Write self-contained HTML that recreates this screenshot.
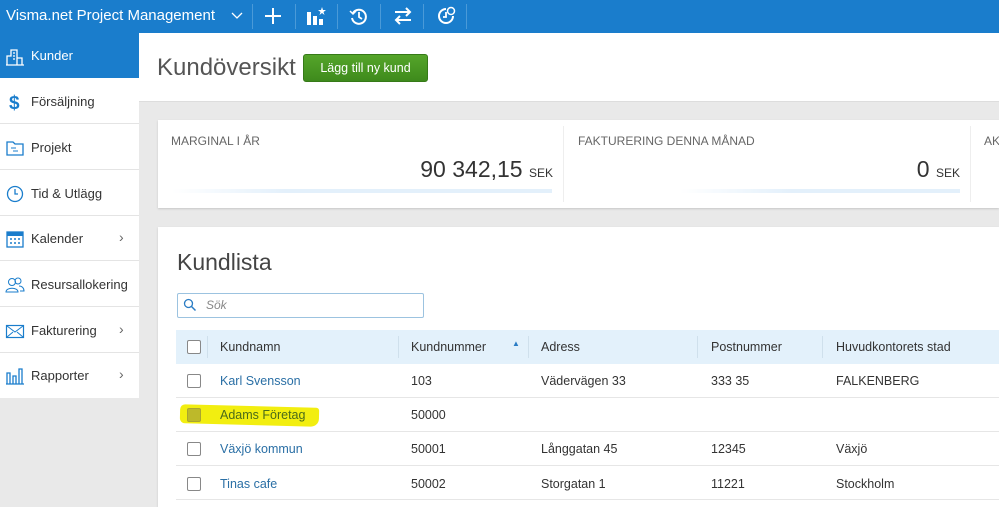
<!DOCTYPE html>
<html><head><meta charset="utf-8"><style>
*{box-sizing:border-box;margin:0;padding:0}
body{width:999px;height:507px;overflow:hidden;background:#e9e9e9;font-family:"Liberation Sans",sans-serif;position:relative;color:#333}
.abs{position:absolute}
.top{left:0;top:0;width:999px;height:33px;background:#1a7dcc}
.top .t{left:6px;top:7px;color:#fff;font-size:15px}
.sep{top:4px;width:1px;height:25px;background:#4a9ad8}
.side{left:0;top:33px;width:139px;height:365px;background:#fff}
.it{position:absolute;left:0;width:139px;height:45px;border-bottom:1px solid #e4e4e4;font-size:13px;color:#333}
.it span{position:absolute;left:31px;top:15px}
.it i{position:absolute;left:119px;top:13px;font-style:normal;color:#666;font-size:14px}
.it svg{position:absolute;left:5px;top:13px}
.chk{position:absolute;width:14px;height:14px;border:1px solid #888;border-radius:2px;background:#fff}
.cell{position:absolute;font-size:12.5px}
.row{position:absolute;left:176px;width:823px;height:34px;border-bottom:1px solid #e6e6e6}
.lnk{color:#2a6fa5}
</style></head><body>
<div class="abs top">
<div class="abs t">Visma.net Project Management</div>
<svg class="abs" style="left:231px;top:12px" width="12" height="8"><path d="M1 1l5 5 5-5" stroke="#fff" fill="none" stroke-width="1.3"/></svg>
<div class="abs sep" style="left:252px"></div>
<svg class="abs" style="left:264px;top:7px" width="18" height="18"><path d="M9 1v16M1 9h16" stroke="#fff" stroke-width="2"/></svg>
<div class="abs sep" style="left:295px"></div>
<svg class="abs" style="left:306px;top:6px" width="20" height="20"><rect x="1" y="6" width="4" height="13" fill="#fff"/><rect x="7" y="10" width="4" height="9" fill="#fff"/><rect x="13" y="13" width="4" height="6" fill="#fff"/><path d="M16 1l1 3h3l-2.5 2 1 3-2.5-2-2.5 2 1-3-2.5-2h3z" fill="#fff"/></svg>
<div class="abs sep" style="left:337px"></div>
<svg class="abs" style="left:349px;top:6px" width="20" height="20"><path d="M4 7a7 7 0 1 1-1 5" stroke="#fff" stroke-width="2" fill="none"/><path d="M1 5l3 3 3-3" stroke="#fff" stroke-width="1.5" fill="none"/><path d="M10 6v5l3 2" stroke="#fff" stroke-width="1.8" fill="none"/></svg>
<div class="abs sep" style="left:380px"></div>
<svg class="abs" style="left:393px;top:7px" width="20" height="18"><path d="M2 5h15M13 1l4 4-4 4M18 13H3M7 9l-4 4 4 4" stroke="#fff" stroke-width="2" fill="none"/></svg>
<div class="abs sep" style="left:423px"></div>
<svg class="abs" style="left:436px;top:6px" width="20" height="20"><path d="M10 3a7 7 0 1 0 7 7" stroke="#fff" stroke-width="2" fill="none"/><path d="M10 6v5h-3" stroke="#fff" stroke-width="1.8" fill="none"/><circle cx="15" cy="5" r="3.5" fill="none" stroke="#fff" stroke-width="1.5"/></svg>
<div class="abs sep" style="left:466px"></div>
</div>
<div class="abs side">
<div class="it" style="top:0;background:#1a7dcc;color:#fff;border:0"><svg width="20" height="20"><path d="M2 19V10h4V4h6v15M12 19v-7h5v7M1 19h18M8 7h2M8 10h2M8 13h2" stroke="#fff" fill="none" stroke-width="1.3"/></svg><span style="color:#fff">Kunder</span></div>
<div class="it" style="top:46px"><svg width="20" height="20"><text x="4" y="17" font-size="19" font-weight="bold" fill="#1a7dcc" font-family="Liberation Sans">$</text></svg><span>Försäljning</span></div>
<div class="it" style="top:92px"><svg width="20" height="20"><path d="M2 4h6l2 2h8v11H2z" stroke="#1a7dcc" fill="none" stroke-width="1.3"/><path d="M6 10h5M8 13h5" stroke="#1a7dcc"/></svg><span>Projekt</span></div>
<div class="it" style="top:138px"><svg width="20" height="20"><circle cx="10" cy="10" r="7.5" stroke="#1a7dcc" fill="none" stroke-width="1.3"/><path d="M10 5v5h3" stroke="#1a7dcc" fill="none" stroke-width="1.3"/></svg><span>Tid &amp; Utlägg</span></div>
<div class="it" style="top:183px"><svg width="20" height="20"><rect x="2" y="3" width="16" height="15" stroke="#1a7dcc" fill="none" stroke-width="1.3"/><rect x="2" y="3" width="16" height="4" fill="#1a7dcc"/><path d="M5 10h2M9 10h2M13 10h2M5 14h2M9 14h2M13 14h2" stroke="#1a7dcc" stroke-width="1.5"/></svg><span>Kalender</span><i>&#8250;</i></div>
<div class="it" style="top:229px"><svg width="20" height="20"><circle cx="7" cy="7" r="3.5" stroke="#1a7dcc" fill="none"/><path d="M1 17c0-5 12-5 12 0z" stroke="#1a7dcc" fill="none"/><circle cx="13" cy="6" r="3" stroke="#1a7dcc" fill="none"/><path d="M14 11c3 0 5 2 5 5h-4" stroke="#1a7dcc" fill="none"/></svg><span>Resursallokering</span></div>
<div class="it" style="top:275px"><svg width="20" height="20"><rect x="1.5" y="4.5" width="17" height="12" stroke="#1a7dcc" fill="none" stroke-width="1.2"/><path d="M2 5l8 6 8-6M2 16l6-5M18 16l-6-5" stroke="#1a7dcc" fill="none"/></svg><span>Fakturering</span><i>&#8250;</i></div>
<div class="it" style="top:320px;border:0"><svg width="20" height="20"><path d="M1 18h18M2 18V7h3v11M8 18V10h3v8M14 18V3h3v15" stroke="#1a7dcc" fill="none" stroke-width="1.3"/></svg><span>Rapporter</span><i>&#8250;</i></div>
</div>
<div class="abs" style="left:139px;top:33px;width:860px;height:69px;background:#fff;border-bottom:1px solid #ddd"></div>
<div class="abs" style="left:157px;top:54px;font-size:24px;color:#555">Kundöversikt</div>
<div class="abs" style="left:303px;top:54px;width:125px;height:28px;background:linear-gradient(#55a52a,#3e8a1c);border-radius:3px;color:#fff;font-size:12.5px;text-align:center;line-height:26px;border:1px solid #367a18">Lägg till ny kund</div>
<div class="abs" style="left:158px;top:120px;width:841px;height:88px;background:#fff;box-shadow:0 1px 2px rgba(0,0,0,.15)"></div>
<div class="abs" style="left:563px;top:126px;width:1px;height:76px;background:#eee"></div>
<div class="abs" style="left:970px;top:126px;width:1px;height:76px;background:#eee"></div>
<div class="abs" style="left:171px;top:134px;font-size:12px;color:#666">MARGINAL I ÅR</div>
<div class="abs" style="left:578px;top:134px;font-size:12px;color:#666">FAKTURERING DENNA MÅNAD</div>
<div class="abs" style="left:984px;top:134px;font-size:12px;color:#666">AK</div>
<div class="abs" style="left:300px;top:156px;width:253px;text-align:right;font-size:23px;color:#333">90 342,15 <span style="font-size:12px">SEK</span></div>
<div class="abs" style="left:700px;top:156px;width:260px;text-align:right;font-size:23px;color:#333">0 <span style="font-size:12px">SEK</span></div>
<div class="abs" style="left:172px;top:189px;width:380px;height:4px;background:linear-gradient(90deg,#fff,#e3f0fb 30%)"></div>
<div class="abs" style="left:680px;top:189px;width:280px;height:4px;background:linear-gradient(90deg,#fff,#e3f0fb 40%)"></div>
<div class="abs" style="left:158px;top:227px;width:841px;height:280px;background:#fff;box-shadow:0 1px 2px rgba(0,0,0,.15)"></div>
<div class="abs" style="left:177px;top:249px;font-size:23px;color:#444">Kundlista</div>
<div class="abs" style="left:177px;top:293px;width:247px;height:25px;border:1px solid #9cc3e0;border-radius:2px"></div>
<svg class="abs" style="left:183px;top:298px" width="14" height="14"><circle cx="5.5" cy="5.5" r="4" stroke="#2a7cc4" fill="none" stroke-width="1.3"/><path d="M8.5 8.5l4 4" stroke="#2a7cc4" stroke-width="1.5"/></svg>
<div class="abs" style="left:206px;top:298px;font-size:12px;color:#888;font-style:italic">Sök</div>
<div class="abs" style="left:176px;top:330px;width:823px;height:34px;background:#e3f1fb"></div>
<div class="chk" style="left:187px;top:340px"></div>
<div class="abs" style="left:207px;top:336px;width:1px;height:22px;background:#cfe0ec"></div>
<div class="abs" style="left:398px;top:336px;width:1px;height:22px;background:#cfe0ec"></div>
<div class="abs" style="left:528px;top:336px;width:1px;height:22px;background:#cfe0ec"></div>
<div class="abs" style="left:697px;top:336px;width:1px;height:22px;background:#cfe0ec"></div>
<div class="abs" style="left:822px;top:336px;width:1px;height:22px;background:#cfe0ec"></div>
<div class="cell" style="left:220px;top:340px">Kundnamn</div>
<div class="cell" style="left:411px;top:340px">Kundnummer</div>
<div class="cell" style="left:512px;top:339px;font-size:8px;color:#2a7cc4">▲</div>
<div class="cell" style="left:541px;top:340px">Adress</div>
<div class="cell" style="left:711px;top:340px">Postnummer</div>
<div class="cell" style="left:836px;top:340px">Huvudkontorets stad</div>

<div class="row" style="top:364px"></div>
<div class="chk" style="left:187px;top:374px"></div>
<div class="cell lnk" style="left:220px;top:374px">Karl Svensson</div>
<div class="cell" style="left:411px;top:374px">103</div><div class="cell" style="left:541px;top:374px">Vädervägen 33</div><div class="cell" style="left:711px;top:374px">333 35</div><div class="cell" style="left:836px;top:374px">FALKENBERG</div>

<div class="row" style="top:398px"></div>
<div class="abs" style="left:180px;top:406px;width:139px;height:19px;background:#f2ee10;border-radius:5px 3px 8px 5px;transform:rotate(1.5deg)"></div>
<div class="chk" style="left:187px;top:408px;background:#bdb92a;border-color:#a9a530"></div>
<div class="cell" style="left:220px;top:408px;color:#4a6a1a">Adams Företag</div>
<div class="cell" style="left:411px;top:408px">50000</div>

<div class="row" style="top:432px"></div>
<div class="chk" style="left:187px;top:442px"></div>
<div class="cell lnk" style="left:220px;top:442px">Växjö kommun</div>
<div class="cell" style="left:411px;top:442px">50001</div><div class="cell" style="left:541px;top:442px">Långgatan 45</div><div class="cell" style="left:711px;top:442px">12345</div><div class="cell" style="left:836px;top:442px">Växjö</div>

<div class="row" style="top:466px"></div>
<div class="chk" style="left:187px;top:477px"></div>
<div class="cell lnk" style="left:220px;top:477px">Tinas cafe</div>
<div class="cell" style="left:411px;top:477px">50002</div><div class="cell" style="left:541px;top:477px">Storgatan 1</div><div class="cell" style="left:711px;top:477px">11221</div><div class="cell" style="left:836px;top:477px">Stockholm</div>
</body></html>
